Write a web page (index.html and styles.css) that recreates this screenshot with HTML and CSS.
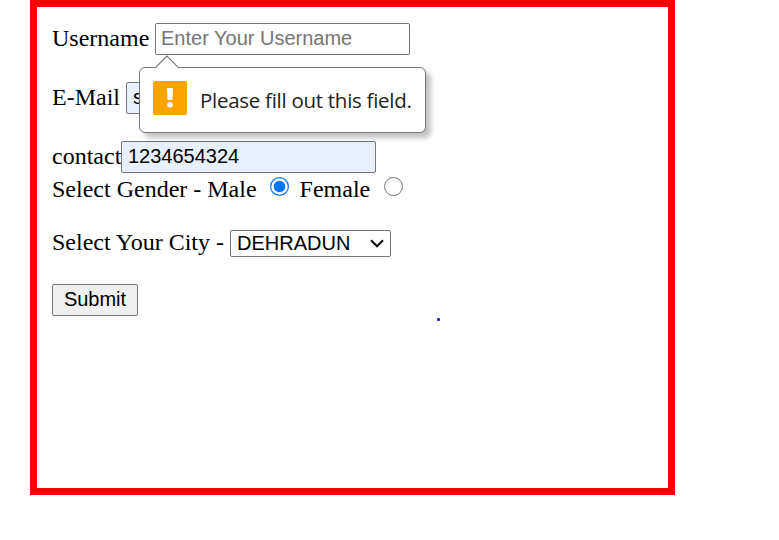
FILE: index.html
```
<!DOCTYPE html>
<html lang="en">
<head>
<meta charset="utf-8">
<title>Form</title>
<link rel="stylesheet" href="styles.css">
</head>
<body>
<form class="frame">
  <div class="row username">
    <label for="user">Username</label>
    <input class="field" id="user" type="text" placeholder="Enter Your Username">
    <div class="tooltip">
      <svg class="arrow" width="26" height="14" viewBox="0 0 26 14"><path d="M1 14V13.5L13 1.2 25 13.5V14z" fill="#fff"/><path d="M1 13.2 13 1.2 25 13.2" fill="none" stroke="#767676" stroke-width="1.2"/></svg>
      <svg class="warning" width="34" height="34" viewBox="0 0 34 34"><rect width="34" height="34" rx="2" fill="#ffa300"/><path d="M14 7h6l-.5 12h-5z" fill="#fff"/><circle cx="17" cy="23.7" r="2.8" fill="#fff"/></svg>
      <span class="message">Please fill out this field.</span>
    </div>
  </div>
  <div class="row email">
    <label for="mail">E-Mail</label>
    <input class="field filled" id="mail" type="text" value="s">
  </div>
  <div class="row contact">
    <label for="contact">contact</label>
    <input class="field filled" id="contact" type="text" value="1234654324">
  </div>
  <div class="row gender">
    <span>Select Gender - Male</span>
    <svg class="radio male" width="20" height="20" viewBox="0 0 20 20"><circle cx="9.5" cy="9.5" r="8.9" fill="#fff" stroke="#0075ff" stroke-width="1.2"/><circle cx="9.5" cy="9.5" r="5.8" fill="#0075ff"/></svg>
    <span>Female</span>
    <svg class="radio female" width="20" height="20" viewBox="0 0 20 20"><circle cx="10.5" cy="9.5" r="9" fill="#fff" stroke="#767676"/></svg>
  </div>
  <div class="row city">
    <span>Select Your City -</span>
    <div class="select"><span>DEHRADUN</span><svg width="14" height="9" viewBox="0 0 14 9"><path d="M1 1.2 7 7.2 13 1.2" fill="none" stroke="#111" stroke-width="2.2"/></svg></div>
  </div>
  <button class="submit" type="button">Submit</button>
  <span class="dot"></span>
</form>
</body>
</html>
```
FILE: styles.css
```
* {
  box-sizing: border-box;
}

body {
  margin: 0;
  background: #fff;
  color: #000;
  font: 24px/28px "Liberation Serif", serif;
}

.frame {
  position: relative;
  width: 645px;
  height: 495px;
  margin-left: 30px;
  padding: 16px 15px;
  border: 7px solid #f00;
}

.row {
  position: relative;
  display: flex;
  align-items: flex-start;
  height: 32px;
  white-space: nowrap;
}

.row > label {
  padding-top: 1px;
}

.username > label {
  width: 103px;
}

.username {
  z-index: 2;
}

.email {
  margin-top: 27px;
}

.email > label {
  width: 74px;
}

.contact {
  margin-top: 27px;
}

.contact > label {
  width: 69px;
}

.field {
  width: 255px;
  height: 32px;
  margin: 0;
  padding: 0 5px 2px;
  border: 1px solid #767676;
  border-radius: 2px;
  outline: none;
  background: #fff;
  color: #000;
  font: 20px "Liberation Sans", sans-serif;
}

.field::placeholder {
  color: #757575;
  opacity: 1;
}

.filled {
  padding-left: 6px;
  background: #e8f0fe;
}

.tooltip {
  position: absolute;
  top: 44px;
  left: 87px;
  display: flex;
  align-items: center;
  width: 287px;
  height: 66px;
  padding: 0 13px 4px;
  border: 1px solid #767676;
  border-radius: 6px;
  background: #fff;
  box-shadow: 5px 5px 5px rgba(0, 0, 0, .24);
}

.arrow {
  position: absolute;
  top: -13px;
  left: 14px;
}

.message {
  margin-left: 13px;
  padding-top: 4px;
  color: #222;
  font: 20.5px/28px "Open Sans", sans-serif;
  letter-spacing: -.28px;
}

.gender {
  height: 28px;
  margin-top: 2px;
}

.male {
  margin: 2px 10px 0 13px;
}

.female {
  margin: 2px 0 0 13px;
}

.city {
  height: 30px;
  margin-top: 25px;
}

.select {
  display: flex;
  align-items: center;
  justify-content: space-between;
  width: 161px;
  height: 27px;
  margin: 2px 0 0 6px;
  padding: 0 6px 1px;
  border: 1px solid #767676;
  border-radius: 2px;
  font: 20px/23px "Liberation Sans", sans-serif;
}

.submit {
  display: block;
  width: 86px;
  height: 32px;
  margin: 26px 0 0;
  padding: 0 0 2px;
  border: 1px solid #767676;
  border-radius: 2px;
  background: #efefef;
  color: #000;
  font: 20px "Liberation Sans", sans-serif;
}

.dot {
  display: block;
  width: 3px;
  height: 3px;
  margin: 2px 0 0 385px;
  border-radius: 1px;
  background: #22e;
}
```
